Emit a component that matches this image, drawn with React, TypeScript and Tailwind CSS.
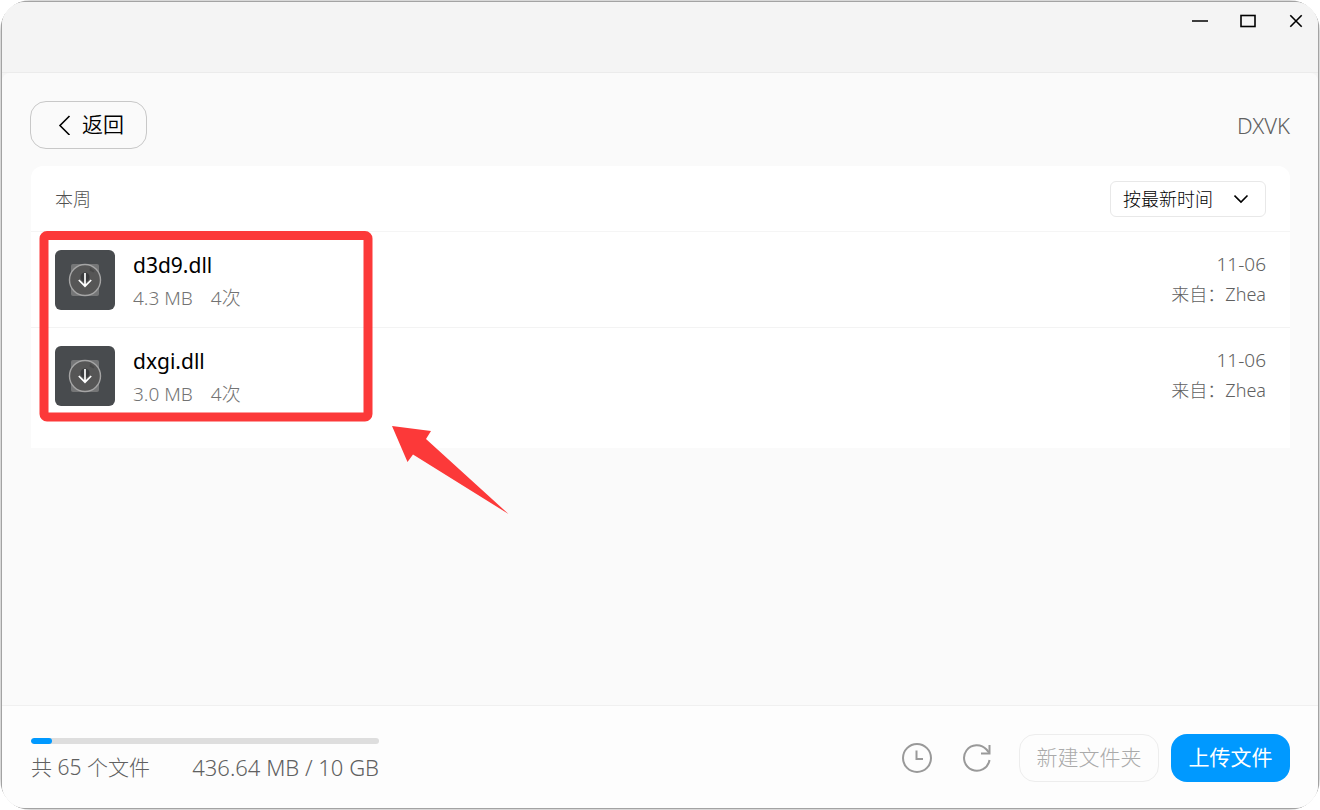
import type { ReactNode } from "react";

type FileItem = {
  name: string;
  size: string;
  downloads: string;
  date: string;
  owner: string;
};

const files: FileItem[] = [
  { name: "d3d9.dll", size: "4.3 MB", downloads: "4次", date: "11-06", owner: "Zhea" },
  { name: "dxgi.dll", size: "3.0 MB", downloads: "4次", date: "11-06", owner: "Zhea" },
];

const usedRatio = 0.06;

function WindowButton({ label, children }: { label: string; children: ReactNode }) {
  return (
    <button type="button" aria-label={label} className="flex h-[38px] w-11 items-center justify-center">
      <svg width="16" height="16" viewBox="0 0 16 16" fill="none" stroke="#000" strokeWidth="1.6">
        {children}
      </svg>
    </button>
  );
}

function TitleBar() {
  return (
    <header className="flex h-[71px] shrink-0 items-start justify-end gap-1 border-b border-[#ebebeb] bg-[#f4f4f4]">
      <WindowButton label="最小化">
        <path d="M0 8H16" />
      </WindowButton>
      <WindowButton label="最大化">
        <rect x="1" y="2.5" width="14" height="11" />
      </WindowButton>
      <WindowButton label="关闭">
        <path d="M2.3 2.3 13.7 13.7M13.7 2.3 2.3 13.7" />
      </WindowButton>
    </header>
  );
}

function FileThumb({ name }: { name: string }) {
  return (
    <button type="button" aria-label={`下载 ${name}`} className="size-[60px] shrink-0 overflow-hidden rounded-md bg-[#484b4e]">
      <svg width="60" height="60" viewBox="0 0 60 60" fill="none">
        <rect x="16" y="14" width="28" height="32" rx="2" fill="#757677" />
        <circle cx="30" cy="30" r="15.5" fill="#565656" stroke="#a5a5a5" strokeWidth="1.4" />
        <circle cx="30" cy="27" r="4.5" fill="#3b3c3e" />
        <path d="M35 17.5l4.5 3.5-1 1.5-4-2z" fill="#484848" />
        <path d="M30 23v13M23.8 30l6.2 6.2 6.2-6.2" stroke="#fff" strokeWidth="1.7" />
      </svg>
    </button>
  );
}

function FileRow({ file }: { file: FileItem }) {
  return (
    <li className="flex h-24 items-start border-b border-[#f3f3f3] px-6 pt-[18px] last:border-b-0">
      <FileThumb name={file.name} />
      <div className="ml-[18px] flex-1">
        <p className="text-[21px] leading-[30px] font-normal text-black">{file.name}</p>
        <p className="mt-1 flex gap-[18px] text-[19px] leading-7 text-[#737373]">
          <span>{file.size}</span>
          <span>{file.downloads}</span>
        </p>
      </div>
      <div className="-mt-px text-right leading-[30px] text-[#606060]">
        <p className="text-[19px] leading-[30px]">{file.date}</p>
        <p className="text-lg leading-[30px]">来自：{file.owner}</p>
      </div>
    </li>
  );
}

// Red frame and pointer around the files that have to be downloaded
function Annotation() {
  return (
    <svg
      className="pointer-events-none absolute top-[60px] left-0"
      width="490"
      height="300"
      viewBox="31 226 490 300"
      fill="none"
      aria-hidden="true"
    >
      <rect x="44" y="235.5" width="324" height="181.5" rx="3" stroke="#fc3939" strokeWidth="9" />
      <path d="M392 426 431 431 426 439 508.500 514 413 454.500 407.500 462Z" fill="#fc3939" />
    </svg>
  );
}

function FileList() {
  return (
    <section className="relative mt-[17px] ml-px rounded-t-xl bg-white pb-6">
      <div className="flex h-[66px] items-center justify-between border-b border-[#f5f5f5] px-6">
        <h2 className="text-lg font-light text-[#505050]">本周</h2>
        <div className="relative">
          <select
            aria-label="排序方式"
            className="h-9 w-[156px] appearance-none rounded-md border border-[#e8e8e8] bg-white pl-3 text-lg leading-7 font-light text-black"
          >
            <option>按最新时间</option>
          </select>
          <svg
            className="pointer-events-none absolute top-2.5 right-4"
            width="16"
            height="16"
            viewBox="0 0 16 16"
            fill="none"
            stroke="#000"
            strokeWidth="1.6"
          >
            <path d="M0.500 4.500l6.500 6.500 6.500-6.500" />
          </svg>
        </div>
      </div>
      <ul>
        {files.map((file) => (
          <FileRow key={file.name} file={file} />
        ))}
      </ul>
      <Annotation />
    </section>
  );
}

function Footer() {
  return (
    <footer className="flex h-[103px] shrink-0 items-start justify-between border-t border-[#f0f0f0] bg-[#fdfdfd] pr-7 pl-[29px]">
      <div className="mt-8 w-[348px]">
        <div
          role="progressbar"
          aria-label="已用空间"
          aria-valuenow={6}
          className="h-1.5 overflow-hidden rounded-full bg-[#dedede]"
        >
          <div className="h-full rounded-full bg-[#0099ff]" style={{ width: `${usedRatio * 100}%` }} />
        </div>
        <div className="mt-2 flex justify-between leading-[30px] whitespace-nowrap text-[#606060]">
          <span className="text-[21px]">共 65 个文件</span>
          <span className="text-[22px]">436.64 MB / 10 GB</span>
        </div>
      </div>
      <div className="mt-7 flex items-center">
        <button type="button" aria-label="传输记录" className="mr-7">
          <svg width="32" height="32" viewBox="0 0 32 32" fill="none" stroke="#999" strokeWidth="2">
            <circle cx="16" cy="16" r="14" />
            <path d="M15.500 8.500v8.500H22" />
          </svg>
        </button>
        <button type="button" aria-label="刷新" className="mr-[26px]">
          <svg width="32" height="32" viewBox="0 0 32 32" fill="none" stroke="#999" strokeWidth="2">
            <path d="M28.500 18A12.800 12.800 0 1 1 25.500 7.500L28 10.500" />
            <path d="M28.500 3v8.500h-8.500" />
          </svg>
        </button>
        <button
          type="button"
          disabled
          className="h-12 w-[140px] rounded-2xl border border-[#ededed] text-[21px] font-light text-[#aaa]"
        >
          新建文件夹
        </button>
        <button type="button" className="ml-3 h-12 w-[119px] rounded-2xl bg-[#0099ff] text-[21px] font-normal text-white">
          上传文件
        </button>
      </div>
    </footer>
  );
}

export default function App() {
  return (
    <div className="h-screen overflow-hidden rounded-[31px] bg-[#d8d8d8] p-px font-['Noto_Sans','Noto_Sans_CJK_SC',sans-serif] font-light">
      <div className="flex h-full flex-col overflow-hidden rounded-3xl border border-[#a3a3a3] bg-[#f4f4f4]">
        <TitleBar />
        <main className="min-h-0 flex-1 rounded-t-lg bg-[#fafafa] px-7 pt-7">
          <div className="flex items-center justify-between">
            <button
              type="button"
              className="flex h-12 w-[117px] items-center rounded-2xl border border-[#c8c8c8] pl-[27px] text-[21px] font-[350] text-black"
            >
              <svg width="14" height="20" viewBox="0 0 14 20" fill="none" stroke="#000" strokeWidth="1.6">
                <path d="M11.500 1 2 10.500 11.500 20" />
              </svg>
              <span className="ml-2.5">返回</span>
            </button>
            <span className="text-[22px] text-[#606060]">DXVK</span>
          </div>
          <FileList />
        </main>
        <Footer />
      </div>
    </div>
  );
}
